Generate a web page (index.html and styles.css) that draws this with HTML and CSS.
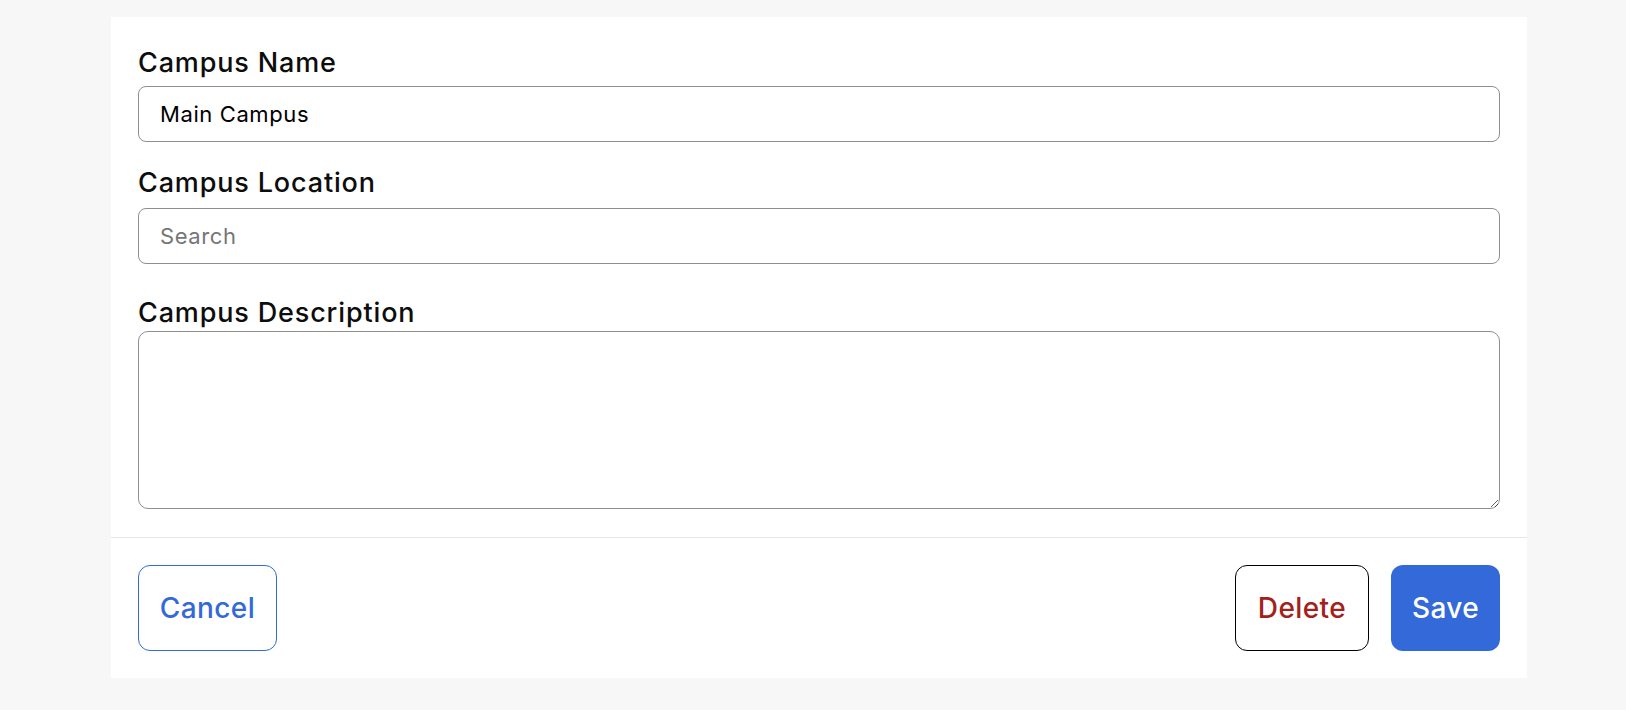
FILE: index.html
```html
<!DOCTYPE html>
<html lang="en">
<head>
<meta charset="utf-8">
<title>Edit Campus</title>
<link rel="stylesheet" href="styles.css">
</head>
<body>
<div class="card">
  <form class="form">
    <label class="label label-name" for="name">Campus Name</label>
    <input class="field" id="name" type="text" value="Main Campus">
    <label class="label label-loc" for="loc">Campus Location</label>
    <div class="search-wrap">
      <input class="field" id="loc" type="text" placeholder="Search">
    </div>
    <label class="label label-desc" for="desc">Campus Description</label>
    <textarea class="area" id="desc"></textarea>
  </form>
  <div class="footer">
    <button class="btn btn-cancel" type="button">Cancel</button>
    <div class="actions">
      <button class="btn btn-delete" type="button">Delete</button>
      <button class="btn btn-save" type="button">Save</button>
    </div>
  </div>
</div>
</body>
</html>
```
FILE: styles.css
```css
* { box-sizing: border-box; }
html, body { margin: 0; padding: 0; }
body {
  background: #f7f7f7;
  font-family: Inter, "Liberation Sans", sans-serif;
  padding-top: 17px;
  height: 710px;
  overflow: hidden;
}
.card {
  width: 1416px;
  margin-left: 111px;
  background: #ffffff;
}
.form {
  display: flex;
  flex-direction: column;
  padding: 30px 27px 28px;
  margin: 0;
}
.label {
  font-size: 27px;
  line-height: 32px;
  font-weight: 500;
  letter-spacing: 0.85px;
  color: #0d0d0d;
  display: block;
}
.label-name { margin-bottom: 7px; }
.label-loc { margin-top: 25px; margin-bottom: 9px; }
.label-desc { margin-top: 33px; margin-bottom: 2px; }
.field {
  display: block;
  width: 100%;
  height: 56px;
  border: 1px solid #8f8f8f;
  border-radius: 8px;
  padding: 0 21px;
  font-family: inherit;
  font-size: 22px;
  letter-spacing: 0.6px;
  color: #000000;
  background: #ffffff;
  outline: none;
}
.field::placeholder { color: #767676; }
.area {
  display: block;
  width: 100%;
  height: 178px;
  border: 1px solid #8f8f8f;
  border-radius: 10px;
  padding: 14px 21px;
  font-family: inherit;
  font-size: 22px;
  background: #ffffff;
  resize: vertical;
  outline: none;
}
.footer {
  border-top: 1px solid #e8e8e8;
  padding: 27px 27px 27px;
  display: flex;
  justify-content: space-between;
  align-items: center;
}
.actions {
  display: flex;
  gap: 22px;
}
.btn {
  height: 86px;
  border-radius: 12px;
  font-family: inherit;
  font-size: 28px;
  font-weight: 500;
  letter-spacing: 0.4px;
  background: #ffffff;
  cursor: pointer;
  padding: 0;
}
.btn-cancel {
  width: 139px;
  border: 1px solid #3369d9;
  color: #3369d9;
}
.btn-delete {
  width: 134px;
  border: 1px solid #000000;
  color: #a3201b;
}
.btn-save {
  width: 109px;
  border: none;
  background: #3369d9;
  color: #ffffff;
}
```
